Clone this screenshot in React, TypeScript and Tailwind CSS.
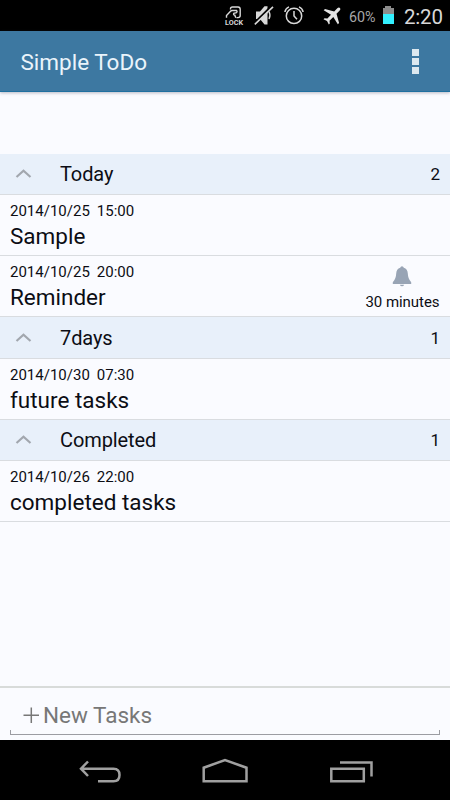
import clsx from "clsx";

type Task = { date: string; time: string; title: string; reminder?: string };
type Group = { name: string; height: string; tasks: Task[]; count: number };

const groups: Group[] = [
  {
    name: "Today",
    height: "h-[41px]",
    count: 2,
    tasks: [
      { date: "2014/10/25", time: "15:00", title: "Sample" },
      { date: "2014/10/25", time: "20:00", title: "Reminder", reminder: "30 minutes" },
    ],
  },
  {
    name: "7days",
    height: "h-[42px]",
    count: 1,
    tasks: [{ date: "2014/10/30", time: "07:30", title: "future tasks" }],
  },
  {
    name: "Completed",
    height: "h-[41px]",
    count: 1,
    tasks: [{ date: "2014/10/26", time: "22:00", title: "completed tasks" }],
  },
];

const LockIcon = () => (
  <svg width="20" height="24" viewBox="0 0 20 24" fill="none" stroke="#d8d8d8" strokeWidth="1.4">
    <path d="M6.5 4.5V4Q6.5 2 8.5 2H14Q16.2 2 16.2 4.2V10.5Q16.2 12.6 14 12.6H12.5" />
    <path d="M2.5 12.8V10.5L6.5 6.2Q7.2 5.5 8.2 5.5H12.5Q13.6 6.5 12.5 7.6L9.8 8.3Q9 9.8 10.8 10.2L11.8 12.8" />
    <text
      x="1"
      y="20.2"
      textLength="18"
      lengthAdjust="spacingAndGlyphs"
      fill="#d8d8d8"
      stroke="none"
      fontSize="8"
      fontWeight="700"
    >
      LOCK
    </text>
  </svg>
);

const MuteIcon = () => (
  <svg width="20" height="22" viewBox="0 0 20 22">
    <path d="M2 6.5H6L10.5 1.2H13.5V19.5H10.5L6 14H2Z" fill="#d8d8d8" />
    <path d="M15 6.5Q17 10.3 15 14" fill="none" stroke="#d8d8d8" strokeWidth="1.4" />
    <path d="M0.6 18L18 0.8" stroke="#000" strokeWidth="2.4" />
    <path d="M0.8 19.4L19 1.8" stroke="#d8d8d8" strokeWidth="1.6" />
  </svg>
);

const AlarmIcon = () => (
  <svg width="20" height="20" viewBox="0 0 20 20" fill="none" stroke="#d8d8d8" strokeWidth="1.5">
    <circle cx="10" cy="10.9" r="7.7" />
    <path d="M10 6V11L13 14.3M0.9 7Q1.5 3.2 5 1.9M19.1 7Q18.5 3.2 15 1.9" />
  </svg>
);

const PlaneIcon = () => (
  <svg width="18" height="18" viewBox="0 0 18 18" fill="#e4e4e4">
    <path d="M17 1Q15.8 0 14.3 1.3L11.2 4.5L2 2L0.7 3.3L8 7.8L4.4 11.6L1.5 11.2L0.5 12.2L4 14L5.8 17.5L6.8 16.5L6.5 13.7L10.3 10L14.8 17.3L16.1 16L13.5 6.8L16.7 3.6Q18 2.2 17 1Z" />
  </svg>
);

const StatusBar = () => (
  <div className="flex h-[31px] items-start bg-black text-[#d8d8d8]">
    <div className="ml-[224px] mt-[5px]">
      <LockIcon />
    </div>
    <div className="ml-[10px] mt-[5px]">
      <MuteIcon />
    </div>
    <div className="ml-[10px] mt-[5px]">
      <AlarmIcon />
    </div>
    <div className="ml-[19px] mt-[7px]">
      <PlaneIcon />
    </div>
    <span className="ml-[8px] mt-[7px] w-[33px] whitespace-nowrap text-[14.3px] leading-[21px] text-[#a6a6a6]">60%</span>
    <div className="mt-[6px] flex w-[12px] flex-col items-center">
      <div className="h-[2px] w-[6px] bg-[#8c8c8c]" />
      <div className="h-[6px] w-[11px] bg-[#8c8c8c]" />
      <div className="h-[10px] w-[11px] bg-[#33f0ff]" />
    </div>
    <span className="ml-[10px] mt-[4px] whitespace-nowrap text-[20.5px] leading-[26px] tracking-[-0.2px]">2:20</span>
  </div>
);

const AppBar = () => (
  <header className="relative flex h-[61px] items-center justify-between border-b border-[#1f70a0] bg-[#3d78a1] pl-[20.5px] pr-[31.5px] shadow-[0_1px_3px_rgba(60,60,90,0.35)]">
    <h1 className="pt-[3px] text-[22.5px] text-[#eaf4fb]">Simple ToDo</h1>
    <div className="flex flex-col gap-[2px]">
      <div className="size-[7px] bg-[#dce8ef]" />
      <div className="size-[7px] bg-[#dce8ef]" />
      <div className="size-[7px] bg-[#dce8ef]" />
    </div>
  </header>
);

const Bell = () => (
  <svg width="20" height="21" viewBox="0 0 20 21" fill="#98a4b5">
    <path d="M10 0.3Q11.4 0.3 11.8 1.8Q15.6 3 15.8 7.5Q16 13 19.2 16.2V18H0.8V16.2Q4 13 4.2 7.5Q4.4 3 8.2 1.8Q8.6 0.3 10 0.3Z" />
    <path d="M7.8 18.7H12.2Q11.5 20.3 10 20.3Q8.5 20.3 7.8 18.7Z" />
  </svg>
);

const TaskRow = ({ task }: { task: Task }) => (
  <li className="flex h-[61px] justify-between border-b border-[#d9dce0] px-[10px]">
    <div className="pt-[7px]">
      <p className="flex gap-[7px] text-[15px] leading-[18px]">
        <span>{task.date}</span>
        <span>{task.time}</span>
      </p>
      <p className="pt-[3px] text-[22.5px] leading-[27px]">{task.title}</p>
    </div>
    {task.reminder && (
      <div className="flex flex-col items-center pr-[0.5px] pt-[10px]">
        <Bell />
        <p className="mt-[6px] text-[15px] leading-[18px] tracking-[-0.05px]">{task.reminder}</p>
      </div>
    )}
  </li>
);

const TaskGroup = ({ group }: { group: Group }) => (
  <section>
    <div className={clsx("flex items-center border-b border-[#d9dce0] bg-[#e8f0fa] px-[10px]", group.height)}>
      <svg className="ml-[5px]" width="17" height="10" viewBox="0 0 17 10" fill="none" stroke="#a2a7ae" strokeWidth="2.2">
        <path d="M1.5 8L8.5 1.8L15.5 8" />
      </svg>
      <h2 className="ml-[28px] flex-1 pt-[0.5px] text-[20px] tracking-[-0.1px]">{group.name}</h2>
      <span className="pt-[2px] text-[17px]">{group.count}</span>
    </div>
    <ul>
      {group.tasks.map((task) => (
        <TaskRow key={task.title} task={task} />
      ))}
    </ul>
  </section>
);

const NewTask = () => (
  <div className="flex h-[54px] flex-col border-t-2 border-[#d8dbda] px-[10px]">
    <div className="flex h-[42px] items-center pl-[13px] pt-[12px] text-[22.5px] text-[#777777]">
      <svg width="17" height="17" viewBox="0 0 17 17" stroke="#777777" strokeWidth="1.5">
        <path d="M8.3 0.5V16M0.5 8.2H16" />
      </svg>
      <span className="ml-[3px] pt-[2px]">New Tasks</span>
    </div>
    <div className="h-[5px] border-x border-b border-[#9b9ca2]" />
  </div>
);

const NavBar = () => (
  <nav className="flex h-[60px] items-start bg-black pl-[79px] pt-[18px]">
    <svg width="43" height="26" viewBox="0 0 43 26" fill="none" stroke="#a0a0a0" strokeWidth="2.5">
      <path d="M9 3.5L2 10.7L9 18M2.5 10.7H34.5Q40.5 10.7 40.5 17Q40.5 23.3 34.5 23.3H19" />
    </svg>
    <svg className="ml-[79px]" width="48" height="26" viewBox="0 0 48 26" fill="none" stroke="#a0a0a0" strokeWidth="2.5">
      <path d="M2.7 23.3V9.7L24 2L45.5 9.7V23.3Z" />
    </svg>
    <svg className="ml-[80px]" width="45" height="26" viewBox="0 0 45 26" fill="none" stroke="#a0a0a0" strokeWidth="2.5">
      <path d="M2.3 10.7H34.8V23.3H2.3ZM11 4.4H42.5V18.5" />
    </svg>
  </nav>
);

const App = () => {
  return (
    <div className="flex h-[800px] w-[450px] flex-col overflow-hidden bg-[#fafbff] font-[Roboto,sans-serif] text-[#0c0d14]">
      <StatusBar />
      <AppBar />
      <main className="flex-1 pt-[62px]">
        {groups.map((group) => (
          <TaskGroup key={group.name} group={group} />
        ))}
      </main>
      <NewTask />
      <NavBar />
    </div>
  );
};

export default App;
